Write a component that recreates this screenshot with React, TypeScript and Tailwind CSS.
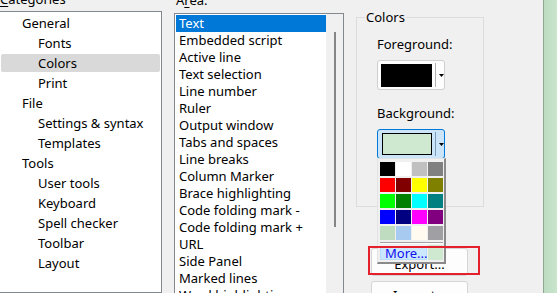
import React from 'react';

const categories = [
  { label: 'General', sub: false },
  { label: 'Fonts', sub: true },
  { label: 'Colors', sub: true, selected: true },
  { label: 'Print', sub: true },
  { label: 'File', sub: false },
  { label: 'Settings & syntax', sub: true },
  { label: 'Templates', sub: true },
  { label: 'Tools', sub: false },
  { label: 'User tools', sub: true },
  { label: 'Keyboard', sub: true },
  { label: 'Spell checker', sub: true },
  { label: 'Toolbar', sub: true },
  { label: 'Layout', sub: true },
];

const areas = [
  'Text',
  'Embedded script',
  'Active line',
  'Text selection',
  'Line number',
  'Ruler',
  'Output window',
  'Tabs and spaces',
  'Line breaks',
  'Column Marker',
  'Brace highlighting',
  'Code folding mark -',
  'Code folding mark +',
  'URL',
  'Side Panel',
  'Marked lines',
  'Word highlighting',
];

// standard 16 colours + 4 system ones
const palette = [
  '#000000', '#ffffff', '#c0c0c0', '#808080',
  '#ff0000', '#800000', '#ffff00', '#808000',
  '#00ff00', '#008000', '#00ffff', '#008080',
  '#0000ff', '#000080', '#ff00ff', '#800080',
  '#c0dcc0', '#a6caf0', '#fffbf0', '#a0a0a4',
];

const Arrow: React.FC = () => (
  <svg width="5" height="3" viewBox="0 0 5 3" className="block">
    <path d="M0 0h5L2.5 3z" fill="#000" />
  </svg>
);

const App: React.FC = () => {
  return (
    <div className="relative w-[557px] h-[293px] overflow-hidden bg-[#f0f0f0] text-[13px] leading-[17px] text-black font-['Noto_Sans',sans-serif] flex">
      {/* Categories */}
      <div className="w-[163px] ml-[-1px] mt-[-9px] flex flex-col shrink-0">
        <div className="h-[17px] pl-[1px] mb-[3px] shrink-0">
          <span className="underline underline-offset-2">C</span>ategories
        </div>
        <div className="flex-1 bg-white border border-[#828790] pt-[1px]">
          {categories.map((c) => (
            <div key={c.label} className="h-[20px] py-[1px] px-[1px]">
              <div
                className={`h-[18px] flex items-center rounded-[2px] ${c.sub ? 'pl-[37px]' : 'pl-[21px]'} ${
                  c.selected ? 'bg-[#d9d9d9]' : ''
                }`}
              >
                {c.label}
              </div>
            </div>
          ))}
        </div>
      </div>

      {/* Area */}
      <div className="w-[170px] ml-[12px] mt-[-8px] flex flex-col shrink-0">
        <div className="h-[17px] pl-[2px] mb-[4px] shrink-0">
          A<span className="underline underline-offset-2">r</span>ea:
        </div>
        <div className="flex-1 bg-white border border-[#828790] flex">
          <div className="flex-1 pt-[1px] pl-[1px]">
            {areas.map((a, i) => (
              <div
                key={a}
                className={`h-[17px] pl-[3px] flex items-center whitespace-nowrap ${
                  i === 0 ? 'bg-[#0078d7] text-white' : ''
                }`}
              >
                {a}
              </div>
            ))}
          </div>
          <div className="w-[17px] bg-[#f0f0f0] flex justify-center pt-[18px]">
            <div className="w-[2px] h-[195px] bg-[#858585] ml-[1px]" />
          </div>
        </div>
      </div>

      {/* Colors group + buttons */}
      <div className="ml-[12px] mt-[17px] w-[128px] flex flex-col shrink-0">
        <div className="h-[190px] shrink-0 border border-[#dcdcdc] relative pl-[20px] pt-[18px]">
          <div className="absolute left-[8px] top-[-9px] px-[1px] bg-[#f0f0f0]">Colors</div>
          <div className="h-[17px]">Foreground:</div>
          <div className="mt-[7px] w-[68px] h-[30px] rounded-[3px] border border-[#cfcfcf] bg-[#fdfdfd] flex items-center pl-[3px]">
            <div className="w-[52px] h-[23px] bg-black" />
            <div className="w-px h-[24px] bg-[#b0b0b0] ml-[3px]" />
            <div className="ml-[3px]">
              <Arrow />
            </div>
          </div>
          <div className="h-[17px] mt-[15px]">Background:</div>
          <div className="mt-[7px] w-[68px] h-[30px] rounded-[3px] border border-[#0078d7] bg-[#cce4f7] flex items-center pl-[4px]">
            <div className="w-[51px] h-[22px] bg-[#cfe8d0] border border-black" />
            <div className="w-px h-[24px] bg-[#7a9cbb] ml-[3px]" />
            <div className="ml-[3px]">
              <Arrow />
            </div>
          </div>
        </div>
        <div className="shrink-0 ml-[15px] mt-[41px] w-[97px] h-[28px] rounded-[3px] border border-[#d5d5d5] bg-[#fdfdfd] flex items-center justify-center pt-[4px]">
          Export...
        </div>
        <div className="shrink-0 ml-[15px] mt-[5px] w-[97px] h-[28px] rounded-[3px] border border-[#d5d5d5] bg-[#fdfdfd] flex items-center justify-center">
          Import...
        </div>
      </div>

      <div className="flex-1" />
      {/* window edge on the right */}
      <div className="w-[14px] border-l border-[#8ea892] bg-gradient-to-r from-[#bcdcc1] to-[#c9e5cc] shrink-0" />

      {/* colour dropdown popup */}
      <div className="absolute left-[377px] top-[158px] w-[69px] h-[106px] bg-[#f0f0f0] border-t border-l border-[#e3e3e3] border-r-2 border-b-2 border-r-[#8a8a8a] border-b-[#8a8a8a] pt-[3px] pl-[2px]">
        <div className="grid grid-cols-4 gap-x-[1px] gap-y-[2px] w-[63px]">
          {palette.map((c, i) => (
            <div key={i} className="h-[14px] w-[15px]" style={{ backgroundColor: c }} />
          ))}
        </div>
        <div className="mt-[2px] w-[63px] h-[2px] border-t border-[#a0a0a0] border-b border-b-white" />
        <div className="flex mt-[1px]">
          <div className="mt-[2px] w-[47px] h-[13px] bg-[#cce8ff] border border-[#b8ddfb] text-[#1010f0] text-[13px] leading-[11px] pl-[4px]">
            More...
          </div>
          <div className="ml-[1px] w-[15px] h-[15px] bg-[#cfe8d0]" />
        </div>
      </div>

      {/* red annotation box */}
      <div className="absolute left-[368px] top-[246px] w-[112px] h-[29px] border-2 border-[#e3202b]" />
    </div>
  );
};

export default App;
